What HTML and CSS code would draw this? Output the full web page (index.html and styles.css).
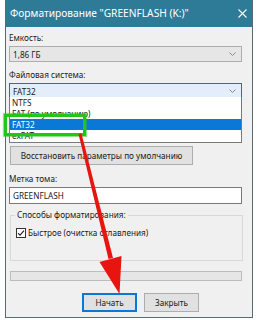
FILE: index.html
```html
<!DOCTYPE html>
<html>
<head>
<meta charset="utf-8">
<link rel="stylesheet" href="styles.css">
</head>
<body>
<div class="window">
  <div class="titlebar">
    <span class="title">Форматирование "GREENFLASH (K:)"</span>
    <svg class="close" width="9" height="9" viewBox="0 0 9 9"><path d="M0.5 0.5L8.5 8.5M8.5 0.5L0.5 8.5" stroke="#fff" stroke-width="1.1"/></svg>
  </div>
  <div class="content">
    <div class="label first">Емкость:</div>
    <div class="combo">
      <span>1,86 ГБ</span>
      <svg class="chev" width="7" height="4" viewBox="0 0 7 4"><path d="M0.5 0.5L3.5 3.5L6.5 0.5" fill="none" stroke="#8a8a8a" stroke-width="1"/></svg>
    </div>
    <div class="label">Файловая система:</div>
    <div class="fs">
      <div class="combo active">
        <span>FAT32</span>
        <svg class="chev" width="7" height="4" viewBox="0 0 7 4"><path d="M0.5 0.5L3.5 3.5L6.5 0.5" fill="none" stroke="#8a8a8a" stroke-width="1"/></svg>
      </div>
      <ul class="list">
        <li>NTFS</li>
        <li>FAT (по умолчанию)</li>
        <li class="sel">FAT32</li>
        <li>exFAT</li>
      </ul>
    </div>
    <button class="btn reset">Восстановить параметры по умолчанию</button>
    <div class="label vol">Метка тома:</div>
    <div class="input">GREENFLASH</div>
    <fieldset class="group">
      <legend>Способы форматирования:</legend>
      <label class="check">
        <svg width="10" height="10" viewBox="0 0 10 10"><rect x="0.5" y="0.5" width="9" height="9" fill="#fff" stroke="#333"/><path d="M2 5.2L4 7.2L8 2.6" fill="none" stroke="#222" stroke-width="1.1"/></svg>
        <span>Быстрое (очистка оглавления)</span>
      </label>
    </fieldset>
    <div class="progress"></div>
    <div class="buttons">
      <button class="btn main">Начать</button>
      <button class="btn">Закрыть</button>
    </div>
  </div>
  <div class="green"></div>
  <svg class="arrow" width="258" height="320" viewBox="0 0 258 320">
    <polygon points="78.5,134 81.5,133.5 113,258 108.5,259" fill="#e8140f"/>
    <polygon points="99.5,262 121.5,256 119.5,294" fill="#e8140f"/>
  </svg>
</div>
</body>
</html>
```
FILE: styles.css
```css
* { box-sizing: border-box; }
html, body { margin: 0; padding: 0; background: #fff; }
body {
  width: 258px;
  height: 320px;
  overflow: hidden;
  font-family: "Noto Sans", "Open Sans", sans-serif;
  font-size: 8.2px;
  color: #1a1a1a;
}
.window {
  margin-left: 5px;
  width: 248px;
  height: 318px;
  background: #f0f0f0;
  border: 1px solid #5a6a72;
  border-top: 0;
  display: flex;
  flex-direction: column;
}
.titlebar {
  height: 27px;
  background: #2e7b98;
  color: #fff;
  display: flex;
  align-items: center;
  justify-content: space-between;
  padding: 0 5px 1px 4px;
  flex: none;
}
.title { font-size: 10.2px; }
.content {
  padding: 0 10px 0 3px;
  display: flex;
  flex-direction: column;
}
.label { line-height: 12px; margin-top: 7px; }
.label.first { margin-top: 5px; }
.combo {
  margin-top: 2px;
  height: 16px;
  background: #e6e6e6;
  border: 1px solid #adadad;
  display: flex;
  align-items: center;
  justify-content: space-between;
  padding: 0 5px 0 3px;
}
.combo.active { background: #e3eefa; border-color: #0a78d2; }
.fs { position: relative; z-index: 2; }
.list {
  position: absolute;
  left: 0;
  right: 0;
  top: 16px;
  margin: 0;
  padding: 0;
  list-style: none;
  background: #fff;
  border: 1px solid #7a7a7a;
  border-top: 0;
  height: 46px;
}
.list li { height: 11px; line-height: 11px; padding-left: 2px; }
.list li.sel { background: #0a78d7; color: #fff; }
.btn {
  font-family: inherit;
  font-size: 8.2px;
  color: #1a1a1a;
  background: #e1e1e1;
  border: 1px solid #adadad;
  height: 19px;
  padding: 0;
}
.reset { margin-top: 47px; margin-left: 1px; width: 183px; }
.label.vol { margin-top: 8px; }
.input {
  margin-top: 2px;
  height: 17px;
  background: #fff;
  border: 1px solid #7a7a7a;
  line-height: 15px;
  padding-left: 3px;
}
.group {
  margin: 5px -1px 0 1px;
  padding: 6px 5px 0 5px;
  height: 52px;
  border: 1px solid #d8d8d8;
}
.group legend { padding: 0 2px; margin-left: -1px; line-height: 12px; }
.check { display: flex; align-items: center; gap: 2px; }
.progress {
  margin-top: 10px;
  margin-left: 1px;
  height: 10px;
  background: #e6e6e6;
  border: 1px solid #bcbcbc;
}
.buttons {
  display: flex;
  gap: 7px;
  margin-top: 12px;
  padding-left: 73px;
}
.buttons .btn { width: 55px; }
.buttons .main { border: 1px solid #0a78d7; box-shadow: inset 0 0 0 1px #0a78d7; }
.green {
  position: absolute;
  left: 4px;
  top: 114px;
  width: 82px;
  height: 22px;
  border: 3px solid #23c41c;
  box-shadow: 0 0 1px 1px rgba(35,196,28,0.5);
  z-index: 3;
}
.arrow { position: absolute; left: 0; top: 0; z-index: 4; pointer-events: none; }
```
